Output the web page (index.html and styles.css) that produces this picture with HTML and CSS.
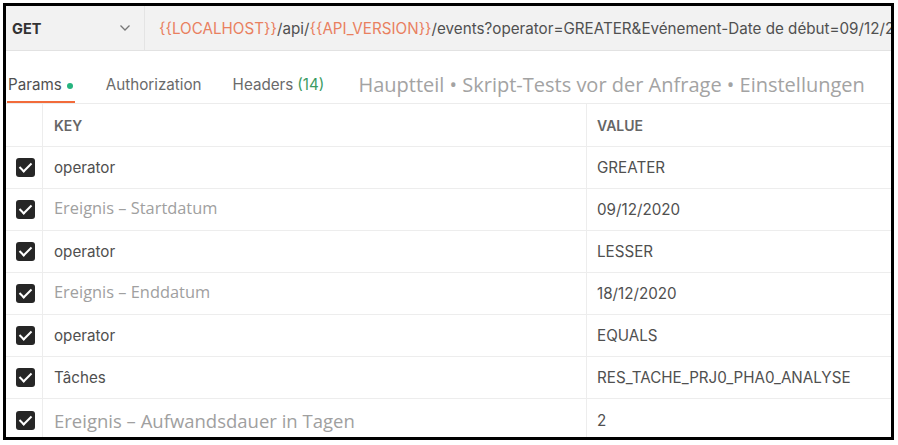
FILE: index.html
```html
<!DOCTYPE html>
<html>
<head>
<meta charset="utf-8">
<link rel="stylesheet" href="styles.css">
</head>
<body>
<div class="frame">
  <div class="urlbar">
    <div class="method"><span class="method-name">GET</span>
      <svg class="chev" width="12" height="8" viewBox="0 0 12 8"><path d="M1.5 1.5 L6 6 L10.5 1.5" fill="none" stroke="#777" stroke-width="1.3"/></svg>
    </div>
    <div class="url"><span class="url-text"><span class="var">{{LOCALHOST}}</span>/api/<span class="var">{{API_VERSION}}</span>/events?operator=GREATER&amp;Evénement-Date de début=09/12/2</span></div>
  </div>
  <div class="tabs">
    <div class="tab active">Params<span class="dot"></span></div>
    <div class="tab">Authorization</div>
    <div class="tab">Headers <span class="count">(14)</span></div>
    <div class="tab-overlay">Hauptteil • Skript-Tests vor der Anfrage • Einstellungen</div>
  </div>
  <div class="table">
    <div class="row head">
      <div class="c-check"></div>
      <div class="c-key">KEY</div>
      <div class="c-val">VALUE</div>
    </div>
    <div class="row">
      <div class="c-check"><span class="cb"></span></div>
      <div class="c-key">operator</div>
      <div class="c-val">GREATER</div>
    </div>
    <div class="row">
      <div class="c-check"><span class="cb"></span></div>
      <div class="c-key tr">Ereignis – Startdatum</div>
      <div class="c-val">09/12/2020</div>
    </div>
    <div class="row">
      <div class="c-check"><span class="cb"></span></div>
      <div class="c-key">operator</div>
      <div class="c-val">LESSER</div>
    </div>
    <div class="row">
      <div class="c-check"><span class="cb"></span></div>
      <div class="c-key tr">Ereignis – Enddatum</div>
      <div class="c-val">18/12/2020</div>
    </div>
    <div class="row">
      <div class="c-check"><span class="cb"></span></div>
      <div class="c-key">operator</div>
      <div class="c-val">EQUALS</div>
    </div>
    <div class="row">
      <div class="c-check"><span class="cb"></span></div>
      <div class="c-key">Tâches</div>
      <div class="c-val">RES_TACHE_PRJ0_PHA0_ANALYSE</div>
    </div>
    <div class="row last">
      <div class="c-check"><span class="cb"></span></div>
      <div class="c-key tr big">Ereignis – Aufwandsdauer in Tagen</div>
      <div class="c-val">2</div>
    </div>
  </div>
</div>
</body>
</html>
```
FILE: styles.css
```css
html, body {
  margin: 0;
  padding: 0;
  background: #fff;
}
body {
  font-family: Inter, "Open Sans", sans-serif;
  color: #505050;
}
.frame {
  margin: 3px;
  width: 885px;
  height: 431px;
  border: 3px solid #000;
  overflow: hidden;
  background: #fff;
}
.urlbar {
  display: flex;
  height: 44px;
  background: #f2f2f2;
  border-bottom: 1px solid #e2e2e2;
}
.method {
  width: 139px;
  flex: none;
  display: flex;
  align-items: center;
  justify-content: space-between;
  padding: 0 13px 0 6px;
  box-sizing: border-box;
  border-right: 1px solid #e4e4e4;
}
.method-name {
  font-weight: 700;
  font-size: 14.5px;
  color: #333;
}
.url {
  flex: 1;
  min-width: 0;
  display: flex;
  align-items: center;
  padding-left: 14px;
  font-size: 15.2px;
  color: #505050;
  white-space: nowrap;
  overflow: hidden;
}
.var {
  color: #e9805f;
}
.tabs {
  display: flex;
  align-items: flex-end;
  height: 50px;
  margin-top: 2px;
  border-bottom: 1px solid #ececec;
}
.tab {
  font-size: 15.2px;
  line-height: 20px;
  color: #6a6a6a;
  padding: 0 0 8px 0;
  margin-right: 31px;
  display: flex;
  align-items: center;
  white-space: nowrap;
}
.tab.active {
  color: #505050;
  margin-left: 1px;
  padding: 0 2px 6px 1px;
  border-bottom: 2px solid #f26b3a;
  margin-right: 31px;
}
.dot {
  display: inline-block;
  width: 6px;
  height: 6px;
  border-radius: 50%;
  background: #26b47f;
  margin: 2px 0 0 5px;
}
.count {
  color: #3a9b63;
  margin-left: 4px;
}
.tab-overlay {
  font-family: "Open Sans", sans-serif;
  font-size: 20px;
  line-height: 26px;
  color: #a3a3a3;
  padding-bottom: 5px;
  margin-left: 3px;
  white-space: nowrap;
}
.table {
  display: flex;
  flex-direction: column;
}
.row {
  display: grid;
  grid-template-columns: 37px 544px 1fr;
  height: 42px;
  border-bottom: 1px solid #ededed;
  box-sizing: border-box;
}
.row.head {
  height: 43px;
}
.row.last {
  border-bottom: none;
}
.row > div {
  display: flex;
  align-items: center;
  font-size: 15.2px;
  color: #505050;
  white-space: nowrap;
}
.c-check {
  justify-content: center;
  padding-left: 2px;
  box-sizing: border-box;
  border-right: 1px solid #ededed;
}
.c-key {
  padding-left: 11px;
  border-right: 1px solid #ededed;
}
.c-val {
  padding-left: 10px;
}
.row.head > div {
  font-size: 14px;
  font-weight: 600;
  color: #666;
}
.c-key.tr {
  font-family: "Open Sans", sans-serif;
  font-size: 16.4px;
  color: #a0a0a0;
  padding-bottom: 4px;
}
.c-key.big {
  font-size: 18.5px;
  padding-bottom: 0;
}
.cb {
  position: relative;
  width: 19px;
  height: 19px;
  border-radius: 3px;
  background: #262626;
}
.cb::after {
  content: "";
  position: absolute;
  left: 6px;
  top: 2px;
  width: 5px;
  height: 10px;
  border: solid #fff;
  border-width: 0 2.5px 2.5px 0;
  transform: rotate(45deg);
}
```
